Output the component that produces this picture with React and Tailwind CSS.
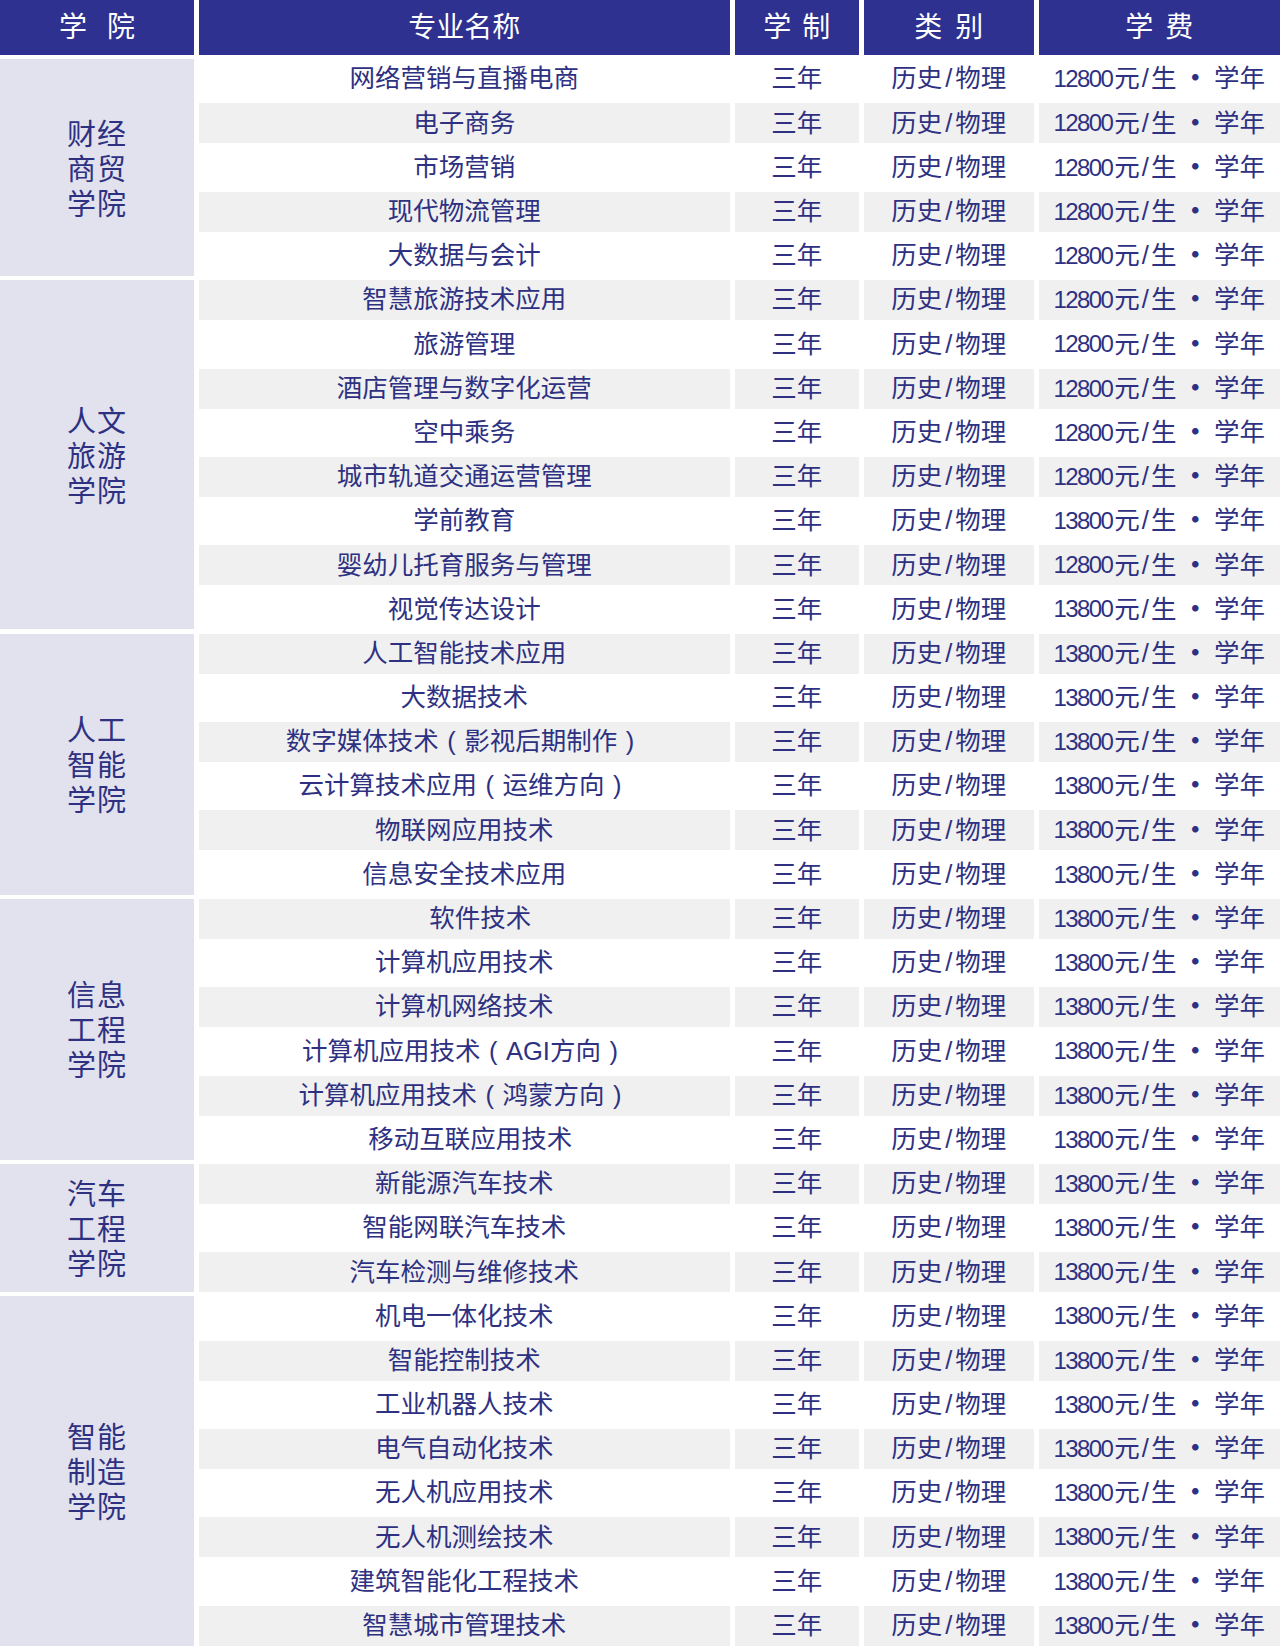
import React from "react";

const groups = [
  {
    label: ["财经", "商贸", "学院"],
    span: "row-span-5",
    rows: [
      ["网络营销与直播电商", "12800"],
      ["电子商务", "12800"],
      ["市场营销", "12800"],
      ["现代物流管理", "12800"],
      ["大数据与会计", "12800"],
    ],
  },
  {
    label: ["人文", "旅游", "学院"],
    span: "row-span-8",
    rows: [
      ["智慧旅游技术应用", "12800"],
      ["旅游管理", "12800"],
      ["酒店管理与数字化运营", "12800"],
      ["空中乘务", "12800"],
      ["城市轨道交通运营管理", "12800"],
      ["学前教育", "13800"],
      ["婴幼儿托育服务与管理", "12800"],
      ["视觉传达设计", "13800"],
    ],
  },
  {
    label: ["人工", "智能", "学院"],
    span: "row-span-6",
    rows: [
      ["人工智能技术应用", "13800"],
      ["大数据技术", "13800"],
      [["数字媒体技术", "影视后期制作"], "13800"],
      [["云计算技术应用", "运维方向"], "13800"],
      ["物联网应用技术", "13800"],
      ["信息安全技术应用", "13800"],
    ],
  },
  {
    label: ["信息", "工程", "学院"],
    span: "row-span-6",
    rows: [
      ["软件技术", "13800", "pl-[32px]"],
      ["计算机应用技术", "13800"],
      ["计算机网络技术", "13800"],
      [["计算机应用技术", "AGI方向"], "13800"],
      [["计算机应用技术", "鸿蒙方向"], "13800"],
      ["移动互联应用技术", "13800", "pl-[12px]"],
    ],
  },
  {
    label: ["汽车", "工程", "学院"],
    span: "row-span-3",
    rows: [
      ["新能源汽车技术", "13800"],
      ["智能网联汽车技术", "13800"],
      ["汽车检测与维修技术", "13800"],
    ],
  },
  {
    label: ["智能", "制造", "学院"],
    span: "row-span-8",
    rows: [
      ["机电一体化技术", "13800"],
      ["智能控制技术", "13800"],
      ["工业机器人技术", "13800"],
      ["电气自动化技术", "13800"],
      ["无人机应用技术", "13800"],
      ["无人机测绘技术", "13800"],
      ["建筑智能化工程技术", "13800"],
      ["智慧城市管理技术", "13800"],
    ],
  },
];

const font = {
  fontFamily: '"Liberation Sans", "Noto Sans CJK SC", sans-serif',
};

function HeaderCell({ chars, gap }) {
  return (
    <div className="flex items-center justify-center bg-[#2e3190] text-white text-[28px] leading-none">
      <div className={`flex ${gap}`}>
        {chars.map((c, i) => (
          <span key={i}>{c}</span>
        ))}
      </div>
    </div>
  );
}

function Name({ value }) {
  if (typeof value === "string") return <span>{value}</span>;
  return (
    <span className="flex items-center">
      <span>{value[0]}</span>
      <span className="inline-block w-[25.5px] text-center">(</span>
      <span>{value[1]}</span>
      <span className="inline-block w-[25.5px] text-center">)</span>
    </span>
  );
}

export default function App() {
  let idx = 0;
  const cells = [];
  groups.forEach((g, gi) => {
    cells.push(
      <div
        key={`g${gi}`}
        className={`${g.span} col-start-1 flex flex-col items-center justify-center pt-[5px] bg-[#e2e2ee] text-[#2e3182] text-[29px] leading-[35px]`}
      >
        {g.label.map((l, i) => (
          <div key={i} className="tracking-[1px]">{l}</div>
        ))}
      </div>
    );
    g.rows.forEach((r) => {
      idx += 1;
      const bg = idx % 2 === 0 ? "bg-[#f0f0f0]" : "bg-white";
      const cls = `${bg} flex items-center justify-center text-[#2e3182] text-[25.5px] leading-none`;
      cells.push(
        <div key={`n${idx}`} className={`${cls} ${r[2] || ""}`}>
          <Name value={r[0]} />
        </div>
      );
      cells.push(
        <div key={`y${idx}`} className={cls}>
          三年
        </div>
      );
      cells.push(
        <div key={`c${idx}`} className={cls}>
          <span>历史</span>
          <span className="mx-[3px]">/</span>
          <span>物理</span>
        </div>
      );
      cells.push(
        <div key={`f${idx}`} className={cls}>
          <span className="text-[24px] tracking-[-1.6px] mr-[2px]">{r[1]}</span>
          <span>元</span>
          <span className="mx-[2px]">/</span>
          <span>生</span>
          <span className="mx-[6px] font-bold">・</span>
          <span>学年</span>
        </div>
      );
    });
  });

  return (
    <div className="w-[1280px] h-[1647px] bg-white overflow-hidden" style={font}>
      <div className="grid grid-cols-[194px_531.5px_124.5px_170.5px_1fr] grid-rows-[55px_repeat(36,40px)] gap-x-[4.5px] gap-y-[4.2px]">
        <HeaderCell chars={["学", "院"]} gap="gap-[20px]" />
        <HeaderCell chars={["专业名称"]} gap="gap-0" />
        <HeaderCell chars={["学", "制"]} gap="gap-[11px]" />
        <HeaderCell chars={["类", "别"]} gap="gap-[13px]" />
        <HeaderCell chars={["学", "费"]} gap="gap-[12px]" />
        {cells}
      </div>
    </div>
  );
}
